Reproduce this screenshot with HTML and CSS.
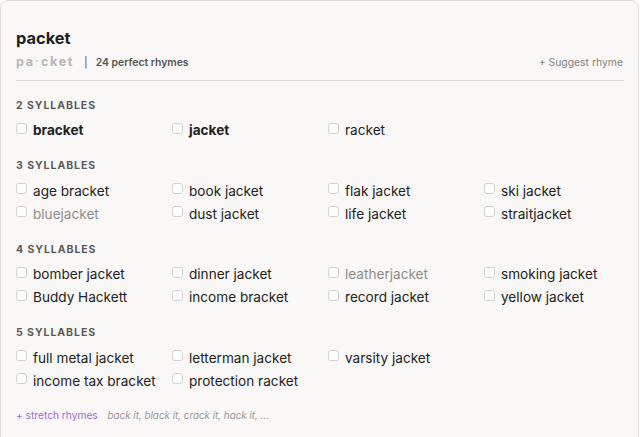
FILE: index.html
```html
<!DOCTYPE html>
<html>
<head>
<meta charset="utf-8">
<link rel="stylesheet" href="styles.css">
</head>
<body>
<div class="card">
  <div class="head">
    <h1 class="title">packet</h1>
    <div class="sub">
      <div class="sub-left">
        <span class="syl">pa<span class="dot">•</span>cket</span>
        <span class="bar">|</span>
        <span class="count">24 perfect rhymes</span>
      </div>
      <span class="suggest">+ Suggest rhyme</span>
    </div>
  </div>

  <section class="group">
    <h2 class="label">2 SYLLABLES</h2>
    <div class="grid">
      <label class="item strong"><span class="box"></span>bracket</label>
      <label class="item strong"><span class="box"></span>jacket</label>
      <label class="item"><span class="box"></span>racket</label>
    </div>
  </section>

  <section class="group">
    <h2 class="label">3 SYLLABLES</h2>
    <div class="grid">
      <label class="item"><span class="box"></span>age bracket</label>
      <label class="item"><span class="box"></span>book jacket</label>
      <label class="item"><span class="box"></span>flak jacket</label>
      <label class="item"><span class="box"></span>ski jacket</label>
      <label class="item dim"><span class="box"></span>bluejacket</label>
      <label class="item"><span class="box"></span>dust jacket</label>
      <label class="item"><span class="box"></span>life jacket</label>
      <label class="item"><span class="box"></span>straitjacket</label>
    </div>
  </section>

  <section class="group">
    <h2 class="label">4 SYLLABLES</h2>
    <div class="grid">
      <label class="item"><span class="box"></span>bomber jacket</label>
      <label class="item"><span class="box"></span>dinner jacket</label>
      <label class="item dim"><span class="box"></span>leatherjacket</label>
      <label class="item"><span class="box"></span>smoking jacket</label>
      <label class="item"><span class="box"></span>Buddy Hackett</label>
      <label class="item"><span class="box"></span>income bracket</label>
      <label class="item"><span class="box"></span>record jacket</label>
      <label class="item"><span class="box"></span>yellow jacket</label>
    </div>
  </section>

  <section class="group">
    <h2 class="label">5 SYLLABLES</h2>
    <div class="grid">
      <label class="item"><span class="box"></span>full metal jacket</label>
      <label class="item"><span class="box"></span>letterman jacket</label>
      <label class="item"><span class="box"></span>varsity jacket</label>
      <span class="empty"></span>
      <label class="item"><span class="box"></span>income tax bracket</label>
      <label class="item"><span class="box"></span>protection racket</label>
    </div>
  </section>

  <div class="stretch">
    <span class="stretch-link">+ stretch rhymes</span>
    <span class="stretch-list">back it, black it, crack it, hack it, ...</span>
  </div>
</div>
</body>
</html>
```

FILE: styles.css
```css
html, body {
  margin: 0;
  padding: 0;
  background: #ffffff;
}
body {
  font-family: Inter, "Liberation Sans", sans-serif;
  color: #222;
}
.card {
  box-sizing: border-box;
  width: 639px;
  min-height: 460px;
  background: #f9f8f6;
  border: 1px solid #dedcda;
  border-radius: 8px;
  padding: 27px 14px 0 15px;
}
.head {
  border-bottom: 1px solid #dddbd8;
  padding-bottom: 9px;
  margin-bottom: 3.5px;
}
.title {
  margin: 0;
  font-size: 16.4px;
  line-height: 20px;
  font-weight: 700;
  color: #1e1e1e;
}
.sub {
  display: flex;
  justify-content: space-between;
  align-items: baseline;
  margin-top: 7px;
  font-size: 10.4px;
  line-height: 14px;
}
.sub-left {
  display: flex;
  align-items: baseline;
}
.syl {
  font-size: 12.6px;
  font-weight: 700;
  letter-spacing: 1.6px;
  color: #b9b7b4;
}
.dot {
  font-size: 6px;
  margin: 0 1px;
  position: relative;
  top: -3px;
}
.bar {
  margin: 0 8px 0 10px;
  color: #888;
  font-weight: 600;
}
.count {
  font-weight: 600;
  color: #555;
}
.suggest {
  color: #808080;
  margin-right: 1px;
}
.group {
  margin-top: 17.5px;
}
.label {
  margin: 0 0 6px;
  font-size: 10.5px;
  line-height: 14px;
  font-weight: 700;
  letter-spacing: 0.95px;
  color: #5a5a5a;
}
.grid {
  display: grid;
  grid-template-columns: repeat(4, 156px);
  grid-auto-rows: 23px;
}
.item {
  display: flex;
  align-items: center;
  font-size: 13.6px;
  color: #222;
  white-space: nowrap;
}
.item.strong {
  font-weight: 700;
}
.item.dim {
  color: #8e8c8a;
}
.box {
  box-sizing: border-box;
  width: 11px;
  height: 11px;
  border: 1px solid #d4d2cf;
  border-radius: 3px;
  background: #fff;
  margin-right: 6px;
  position: relative;
  top: -2px;
  flex: none;
}
.stretch {
  margin-top: 16px;
  font-size: 10.2px;
  line-height: 14px;
}
.stretch-link {
  color: #9a6fd8;
  margin-right: 7px;
}
.stretch-list {
  color: #999;
  font-style: italic;
  font-size: 9.8px;
}
```
